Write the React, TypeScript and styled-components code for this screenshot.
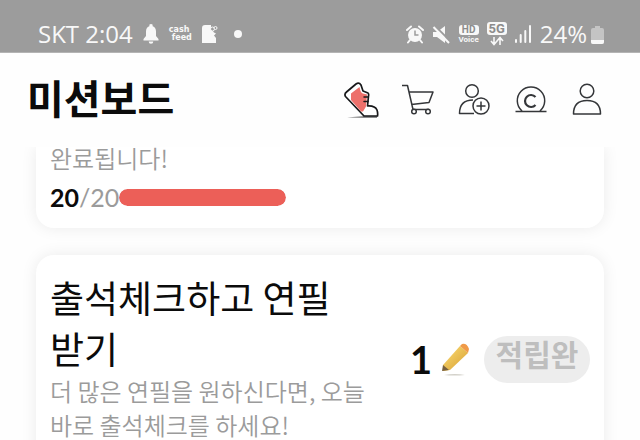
import React from "react";
import styled, { createGlobalStyle } from "styled-components";

const GlobalStyle = createGlobalStyle`
  *, *::before, *::after { box-sizing: border-box; }
  body {
    margin: 0;
    background: #fefefe;
    color: #0b0b0b;
    font-family: "Noto Sans CJK KR", "Noto Sans", sans-serif;
  }
`;

const Screen = styled.div`
  display: flex;
  flex-direction: column;
  height: 100vh;
  overflow: hidden;
`;

const StatusBar = styled.div`
  display: flex;
  flex: none;
  align-items: center;
  justify-content: space-between;
  padding: 16px 36px 0 38px;
  height: 53px;
  background: #9c9c9c;
  border-bottom: 1px solid #b4b4b4;
  color: #f8f8f8;
  font-family: "Open Sans", sans-serif;
  font-size: 24px;
  line-height: 36px;
`;

const StatusGroup = styled.div<{ $gap: number }>`
  display: flex;
  align-items: center;
  gap: ${(p) => p.$gap}px;
`;

const CashFeed = styled.span`
  display: flex;
  flex-direction: column;
  font-family: "DejaVu Sans", sans-serif;
  font-size: 8px;
  font-weight: 700;
  line-height: 8px;

  span:last-child { padding-left: 3px; }
`;

const Dot = styled.span`
  width: 8px;
  height: 8px;
  margin-left: 6px;
  border-radius: 50%;
  background: #f8f8f8;
`;

const Badge = styled.span`
  display: flex;
  flex-direction: column;
  align-items: center;
  gap: 1px;
  font-family: Roboto, sans-serif;
  font-size: 8px;
  font-weight: 700;
  line-height: 8px;
`;

const BadgeLabel = styled.span<{ $large?: boolean }>`
  width: 20px;
  border-radius: 3px;
  background: #f8f8f8;
  color: #8c8c8c;
  text-align: center;
  font-size: ${(p) => (p.$large ? 13 : 10)}px;
  line-height: ${(p) => (p.$large ? 13 : 10)}px;
`;

const Header = styled.header`
  display: flex;
  flex: none;
  align-items: center;
  justify-content: space-between;
  height: 94px;
  padding: 0 36px 0 27px;
`;

const PageTitle = styled.h1`
  margin: 0;
  padding-bottom: 6px;
  font-size: 40px;
  font-weight: 700;
  line-height: 60px;
`;

const Actions = styled.nav`
  display: flex;
  align-items: center;
  gap: 22px;
`;

const IconButton = styled.button`
  display: flex;
  padding: 0;
  border: 0;
  background: none;
  cursor: pointer;
`;

const Missions = styled.main`
  display: flex;
  flex: 1;
  flex-direction: column;
  gap: 27px;
  min-height: 0;
  padding: 0 36px;
  overflow: hidden;
`;

const Card = styled.section<{ $continued?: boolean }>`
  display: flex;
  flex: none;
  align-items: center;
  justify-content: space-between;
  padding: ${(p) => (p.$continued ? "0 14px 15px" : "17px 14px 24px")};
  border-radius: ${(p) => (p.$continued ? "0 0 18px 18px" : "18px")};
  background: #ffffff;
  box-shadow: 0 0 16px rgba(0, 0, 0, 0.08);
`;

const CardText = styled.div`
  display: flex;
  flex-direction: column;
  width: 320px;
  padding-bottom: 4px;
`;

const CardTitle = styled.h2`
  margin: 0;
  font-size: 37px;
  font-weight: 400;
  line-height: 51px;
`;

const Description = styled.p<{ $tight?: boolean }>`
  margin: 0;
  color: #9b9b9b;
  font-size: 24px;
  font-weight: 350;
  line-height: ${(p) => (p.$tight ? 22 : 34)}px;
`;

const Progress = styled.div`
  display: flex;
  align-items: center;
  padding-top: 12px;
`;

const Count = styled.span`
  color: #9b9b9b;
  font-family: Lato, sans-serif;
  font-size: 25px;
  line-height: 32px;

  strong { color: #0b0b0b; font-weight: 700; }
`;

const Track = styled.div`
  width: 167px;
  height: 17px;
  border-radius: 9px;
  background: #eeeeee;
  overflow: hidden;
`;

const Fill = styled.div`
  height: 100%;
  border-radius: 9px;
  background: #ec5f58;
`;

const Reward = styled.div`
  display: flex;
  align-items: center;
  gap: 12px;
`;

const Amount = styled.span`
  display: flex;
  align-items: center;
  gap: 8px;
  font-family: Lato, sans-serif;
  font-size: 38px;
  font-weight: 700;
  line-height: 48px;
`;

const ClaimButton = styled.button`
  display: flex;
  justify-content: center;
  width: 106px;
  height: 47px;
  padding: 0;
  border: 0;
  border-radius: 24px;
  background: #ededed;
  color: #bebebe;
  font-family: inherit;
  font-size: 30px;
  font-weight: 700;
  line-height: 34px;
`;

const line = {
  fill: "none",
  stroke: "#343639",
  strokeWidth: 1.5,
  strokeLinejoin: "round" as const,
};

const Bell = () => (
  <svg width="16" height="20" viewBox="0 0 16 20" fill="#f8f8f8">
    <path d="M8 0a1.8 1.8 0 0 1 1.7 2.2C12 3 13 5 13 7.500V12l2.500 3v1.500H.5V15L3 12V7.500C3 5 4 3 6.300 2.200A1.800 1.800 0 0 1 8 0ZM5.700 17.500h4.600a2.300 2.300 0 0 1-4.600 0Z" />
  </svg>
);

const CardApp = () => (
  <svg width="16" height="20" viewBox="0 0 16 20">
    <path d="M3 1h6v4l3 3.500 2 1-2 2 2 2.500v5H0V4q0-3 3-3Z" fill="#f8f8f8" />
    <circle cx="10.500" cy="5" r="2" fill="#9c9c9c" stroke="#f8f8f8" />
    <circle cx="13.500" cy="4" r="1.500" fill="#9c9c9c" stroke="#f8f8f8" />
  </svg>
);

const Alarm = () => (
  <svg width="18" height="19" viewBox="0 0 18 19">
    <circle cx="9" cy="10" r="7" fill="#f8f8f8" />
    <path d="M1 5 5 1.500M17 5l-4-3.500M4 15l-2 2.500M14 15l2 2.500" stroke="#f8f8f8" strokeWidth="2" strokeLinecap="round" />
    <path d="M9 5.500V10h3.500" fill="none" stroke="#9c9c9c" strokeWidth="1.500" />
  </svg>
);

const Muted = () => (
  <svg width="19" height="19" viewBox="0 0 19 19">
    <path d="M1 7h4l8-6v17l-8-6H1Z" fill="#f8f8f8" />
    <path d="m3 1 16 16" stroke="#9c9c9c" strokeWidth="2" />
    <path d="m1.500 2 15.500 16" stroke="#f8f8f8" strokeWidth="2" />
  </svg>
);

const Arrows = () => (
  <svg width="16" height="10" viewBox="0 0 16 10" fill="none" stroke="#f8f8f8" strokeWidth="1.600">
    <path d="M5 1v7M2 5l3 3.500L8 5M11 9V2M8 5l3-3.500L14 5" />
  </svg>
);

const Signal = () => (
  <svg width="17" height="18" viewBox="0 0 17 18" fill="#f8f8f8">
    <rect x="0" y="14" width="2" height="4" rx="1" />
    <rect x="4.700" y="9" width="2" height="9" rx="1" />
    <rect x="9.300" y="5" width="2" height="13" rx="1" />
    <rect x="14" y="0" width="2" height="18" rx="1" />
  </svg>
);

const Battery = () => (
  <svg width="13" height="19" viewBox="0 0 13 19">
    <path d="M4 1h5v2h2q2 0 2 2v12q0 2-2 2H2q-2 0-2-2V5q0-2 2-2h2Z" fill="#c4c4c4" />
    <path d="M0 15h13v2q0 2-2 2H2q-2 0-2-2Z" fill="#f8f8f8" />
  </svg>
);

const Shoe = () => (
  <svg width="36" height="38" viewBox="0 0 36 38">
    <path d="M1.500 15.500Q0 13 2.500 11L12 3q3-2 5 1l2 6 5 2q1 1 .500 3l-1 10q7.500-.5 9.500 4 1 3 .5 6H20Z" fill="#fff" stroke="#17181a" strokeWidth="1.700" strokeLinejoin="round" />
    <path d="M7 12.500 15.500 6q1 6 3.500 6.500l4 1-1 12-3 5h-2L7 19Z" fill="#ed706b" />
    <path d="M20 16h4M20 20.500h4" fill="none" stroke="#17181a" strokeWidth="1.500" strokeLinecap="round" />
    <path d="M3 36.300 20 35.400h13v1.200H20Z" fill="#17181a" />
  </svg>
);

const Cart = () => (
  <svg width="34" height="34" viewBox="0 0 34 34" {...line}>
    <path d="M0 2.500h5.500l5.500 24h16M7 9h24l-4 10.500-17.500 2" />
    <circle cx="12" cy="28.500" r="2.300" fill="#fff" />
    <circle cx="26" cy="28.500" r="2.300" fill="#fff" />
  </svg>
);

const AddFriend = () => (
  <svg width="34" height="34" viewBox="0 0 34 34" {...line}>
    <circle cx="14" cy="8" r="6.300" />
    <path d="M15 17C6 17 1.500 21 1.500 30.500H16" />
    <circle cx="23" cy="23" r="8" fill="#fff" />
    <path d="M23 18.500v9M18.500 23h9" />
  </svg>
);

const Coin = () => (
  <svg width="34" height="34" viewBox="0 0 34 34" {...line}>
    <path d="M1.500 28.500h31M8 28a13.700 13.700 0 1 1 18 0" />
    <path d="M21.500 14a6 6 0 1 0 0 8" strokeWidth="2.200" />
  </svg>
);

const Profile = () => (
  <svg width="34" height="34" viewBox="0 0 34 34" {...line}>
    <circle cx="17" cy="8" r="6.800" />
    <path d="M3.500 31C3.500 22 8 17.500 17 17.500S30.500 22 30.500 31Z" />
  </svg>
);

const Pencil = () => (
  <svg width="32" height="36" viewBox="0 0 32 36">
    <defs>
      <linearGradient id="pencil-body" x1="0" y1="0" x2="1" y2="1">
        <stop offset="0.3" stopColor="#f1cb61" />
        <stop offset="0.8" stopColor="#deaa3e" />
      </linearGradient>
    </defs>
    <path d="M3 24 20 5l8 7-18 17-7 1Z" fill="url(#pencil-body)" />
    <path d="m20 5 2-2q5-1 7 5l-1 4Z" fill="#f09a48" />
    <path d="m3 24 6 5-7 1Z" fill="#76603f" />
    <path d="M4 34q11-2 21 0-11 1-21 0Z" fill="#d3d1ca" />
  </svg>
);

const actions = [
  { label: "만보기", Icon: Shoe },
  { label: "장바구니", Icon: Cart },
  { label: "친구 추가", Icon: AddFriend },
  { label: "캐시", Icon: Coin },
  { label: "내 정보", Icon: Profile },
];

export default function App() {
  const done = 20;
  const total = 20;

  return (
    <Screen>
      <GlobalStyle />
      <StatusBar>
        <StatusGroup $gap={10}>
          <span>SKT 2:04</span>
          <Bell />
          <CashFeed>
            <span>cash</span>
            <span>feed</span>
          </CashFeed>
          <CardApp />
          <Dot />
        </StatusGroup>
        <StatusGroup $gap={8}>
          <Alarm />
          <Muted />
          <Badge>
            <BadgeLabel>HD</BadgeLabel>
            Voice
          </Badge>
          <Badge>
            <BadgeLabel $large>5G</BadgeLabel>
            <Arrows />
          </Badge>
          <Signal />
          <StatusGroup $gap={4}>
            <span>24%</span>
            <Battery />
          </StatusGroup>
        </StatusGroup>
      </StatusBar>
      <Header>
        <PageTitle>미션보드</PageTitle>
        <Actions>
          {actions.map(({ label, Icon }) => (
            <IconButton key={label} type="button" aria-label={label}>
              <Icon />
            </IconButton>
          ))}
        </Actions>
      </Header>
      <Missions>
        <Card $continued>
          <div>
            <Description $tight>완료됩니다!</Description>
            <Progress>
              <Count>
                <strong>{done}</strong>/{total}
              </Count>
              <Track role="progressbar" aria-label="미션 진행" aria-valuenow={done} aria-valuemax={total}>
                <Fill style={{ width: `${(done / total) * 100}%` }} />
              </Track>
            </Progress>
          </div>
        </Card>
        <Card>
          <CardText>
            <CardTitle>출석체크하고 연필 받기</CardTitle>
            <Description>더 많은 연필을 원하신다면, 오늘 바로 출석체크를 하세요!</Description>
          </CardText>
          <Reward>
            <Amount>
              1<Pencil />
            </Amount>
            <ClaimButton type="button" disabled>
              적립완
            </ClaimButton>
          </Reward>
        </Card>
      </Missions>
    </Screen>
  );
}
